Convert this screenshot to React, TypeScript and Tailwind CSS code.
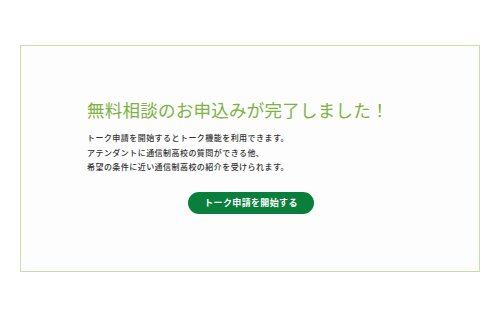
export default function App() {
  return (
    <div className="h-[320px] w-[500px] bg-white pt-[45px] pl-[20px] font-['Noto_Sans_CJK_JP','Noto_Sans',sans-serif]">
      {/* Completion card */}
      <div className="flex h-[227px] w-[460px] flex-col border border-[#c5e2a5] bg-[#fdfdfd] pl-[66px] pt-[51px]">
        <h1 className="text-[17.5px] leading-[26px] font-normal tracking-[0.25px] text-[#7cb342]">
          無料相談のお申込みが完了しました！
        </h1>
        <p className="mt-[8px] text-[8px] leading-[14.5px] font-medium tracking-[0.45px] text-[#333333]">
          トーク申請を開始するとトーク機能を利用できます。
          <br />
          アテンダントに通信制高校の質問ができる他、
          <br />
          希望の条件に近い通信制高校の紹介を受けられます。
        </p>
        <div className="mt-[17px] flex w-[328px] justify-center">
          <button className="h-[22px] w-[126px] rounded-full bg-[#0a7f3b] text-[9px] font-bold tracking-[0.35px] text-white">
            トーク申請を開始する
          </button>
        </div>
      </div>
    </div>
  )
}
